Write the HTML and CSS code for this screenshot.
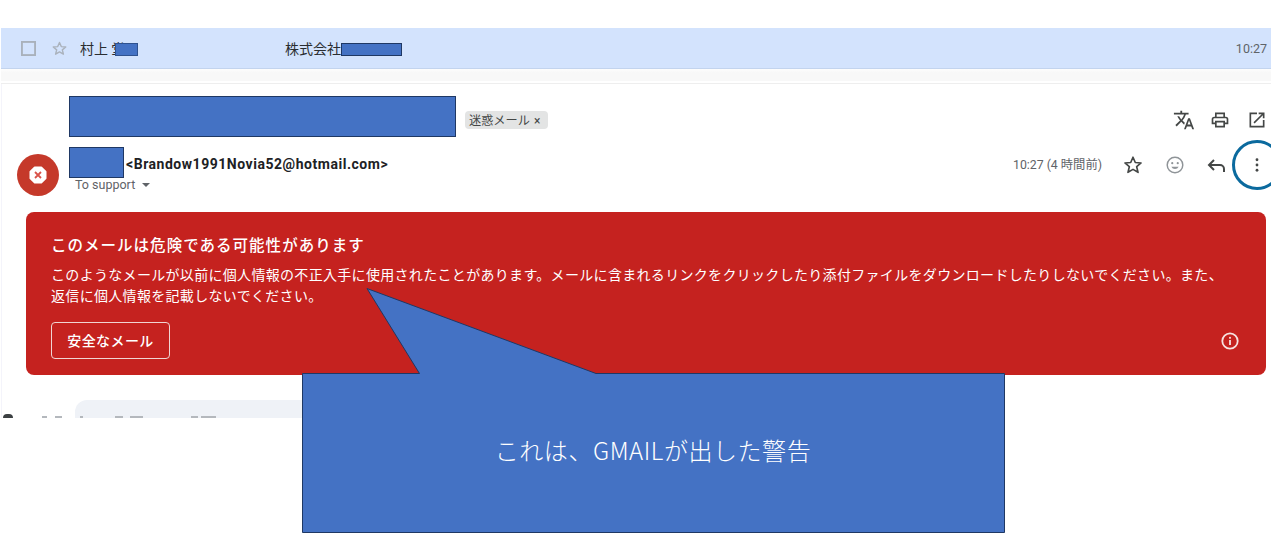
FILE: index.html
```html
<!DOCTYPE html>
<html lang="ja">
<head>
<meta charset="utf-8">
<title>Gmail warning</title>
<link rel="stylesheet" href="styles.css">
</head>
<body>
<div class="page">
  <div class="list-row">
    <svg class="check" viewBox="0 0 16 16" width="15" height="15"><rect x="1" y="1" width="14" height="14" fill="none" stroke="#a9b1bb" stroke-width="2"/></svg>
    <svg class="row-star" viewBox="0 0 24 24" width="17" height="17"><path d="M12 3.5l2.500 5.800 6.300.5-4.800 4.100 1.500 6.100L12 16.800l-5.500 3.200 1.500-6.100-4.800-4.100 6.300-.5z" fill="none" stroke="#aab2bc" stroke-width="2" stroke-linejoin="round"/></svg>
    <div class="sender">村上 堂<span class="redact redact-sender"></span></div>
    <div class="subject">株式会社<span class="redact redact-subject"></span></div>
    <div class="row-time">10:27</div>
  </div>
  <div class="divider"></div>
  <div class="mail">
    <div class="subject-line">
      <span class="redact redact-title"></span>
      <span class="chip">迷惑メール<span class="chip-x">×</span></span>
      <div class="top-icons">
        <svg class="translate" viewBox="0 0 24 24" width="22" height="22"><path d="M12.870 15.070l-2.540-2.510.03-.03A17.500 17.500 0 0 0 14.070 6H17V4h-7V2H8v2H1v2h11.170A15.700 15.700 0 0 1 9 11.350 15.700 15.700 0 0 1 6.690 8h-2a17.500 17.500 0 0 0 2.980 4.560l-5.090 5.020L4 19l5-5 3.110 3.110zM18.500 10h-2L12 22h2l1.120-3h4.750L21 22h2zm-2.620 7l1.620-4.330L19.120 17z" fill="#444746"/></svg>
        <svg viewBox="0 0 24 24" width="20" height="20"><path d="M19 8h-1V3H6v5H5a3 3 0 0 0-3 3v6h4v4h12v-4h4v-6a3 3 0 0 0-3-3zM8 5h8v3H8zm8 14H8v-4h8zm2-4v-2H6v2H4v-4a1 1 0 0 1 1-1h14a1 1 0 0 1 1 1v4z" fill="#444746"/></svg>
        <svg viewBox="0 0 24 24" width="20" height="20"><path d="M19 19H5V5h7V3H3v18h18v-9h-2zM14 3v2h3.590l-9.830 9.830 1.410 1.410L19 6.410V10h2V3z" fill="#444746"/></svg>
      </div>
    </div>
    <div class="header">
      <svg class="avatar" viewBox="0 0 42 42" width="42" height="42"><circle cx="21" cy="21" r="21" fill="#c5392a"/><path d="M17.800 13.500h6.400l4.300 4.300v6.400l-4.300 4.300h-6.400l-4.300-4.300v-6.400z" fill="#fff" stroke="#fff" stroke-linejoin="round" stroke-width="2"/><path d="M18 18l6 6m0-6l-6 6" stroke="#d9534a" stroke-width="1.800"/></svg>
      <div class="who">
        <div class="from"><span class="redact redact-name"></span><b class="addr">&lt;Brandow1991Novia52@hotmail.com&gt;</b></div>
        <div class="to">To support <span class="caret"></span></div>
      </div>
      <div class="meta">
        <span class="mail-time">10:27 (4 時間前)</span>
        <svg class="star" viewBox="0 0 24 24" width="22" height="22"><path d="M12 3.500l2.500 5.800 6.300.5-4.800 4.100 1.500 6.100L12 16.800l-5.500 3.200 1.500-6.100-4.800-4.100 6.300-.5z" fill="none" stroke="#444746" stroke-width="1.800" stroke-linejoin="round"/></svg>
        <svg class="smile" viewBox="0 0 24 24" width="22" height="22"><circle cx="12" cy="12" r="8.500" fill="none" stroke="#8f9498" stroke-width="1.600"/><circle cx="9" cy="10" r="1.200" fill="#8f9498"/><circle cx="15" cy="10" r="1.200" fill="#8f9498"/><path d="M8 14a4.500 4.500 0 0 0 8 0z" fill="#8f9498"/></svg>
        <svg class="reply" viewBox="0 0 24 24" width="24" height="24"><path d="M9 7L4 12l5 5m-5-5h11a4 4 0 0 1 4 4v3" fill="none" stroke="#444746" stroke-width="2"/></svg>
        <svg class="more" viewBox="0 0 4 16" width="4" height="14"><circle cx="2" cy="2" r="1.600" fill="#444746"/><circle cx="2" cy="8" r="1.600" fill="#444746"/><circle cx="2" cy="14" r="1.600" fill="#444746"/></svg>
      </div>
    </div>
    <div class="warning">
      <div class="warn-title">このメールは危険である可能性があります</div>
      <div class="warn-body">このようなメールが以前に個人情報の不正入手に使用されたことがあります。メールに含まれるリンクをクリックしたり添付ファイルをダウンロードしたりしないでください。また、<br>返信に個人情報を記載しないでください。</div>
      <div class="warn-foot">
        <div class="safe-btn">安全なメール</div>
        <svg class="info" viewBox="0 0 20 20" width="20" height="20"><circle cx="10" cy="10" r="7.700" fill="none" stroke="#f7e3e1" stroke-width="1.800"/><rect x="9.100" y="9" width="1.800" height="5" fill="#f7e3e1"/><rect x="9.100" y="5.900" width="1.800" height="1.800" fill="#f7e3e1"/></svg>
      </div>
    </div>
    <div class="below">
      <span class="below-icon"></span>
      <span class="mark m1"></span>
      <span class="mark m2"></span>
      <div class="below-pill">
        <span class="mark m3"></span>
        <span class="mark m4"></span>
        <span class="mark m5"></span>
        <span class="mark m6"></span>
        <span class="mark m7"></span>
      </div>
    </div>
  </div>
  <div class="ring"></div>
  <div class="callout">
    <svg class="callout-shape" viewBox="0 0 704 246" width="704" height="246"><path d="M.5 85.500H117.500L65 .5 294 85.500H702.500V244.500H.5Z" fill="#4472c4" stroke="#1f3864"/></svg>
    <div class="callout-text">これは、GMAILが出した警告</div>
  </div>
</div>
</body>
</html>
```
FILE: styles.css
```css
* { box-sizing: border-box; }
html, body { margin: 0; padding: 0; background: #fff; }
body { font-family: Roboto, "Noto Sans CJK JP", sans-serif; color: #202124; }
.page { position: relative; width: 1271px; height: 540px; overflow: hidden; padding-top: 28px; }

.redact { display: inline-block; background: #4472c4; border: 1px solid #1f3864; vertical-align: top; }

.list-row { height: 41px; margin-left: 1px; background: #d3e3fd; border-bottom: 1px solid #c3d4ee; display: flex; align-items: center; font-size: 14px; color: #2a2d30; }
.check { margin-left: 20px; }
.row-star { margin-left: 15px; }
.sender { margin-left: 12px; width: 205px; font-family: "Noto Sans CJK JP", sans-serif; height: 41px; line-height: 40px; }
.redact-sender { width: 23px; height: 13px; margin-top: 15px; margin-left: -10px; border-color: #2f528f; }
.subject { font-family: "Noto Sans CJK JP", sans-serif; height: 41px; line-height: 40px; flex: 1; }
.redact-subject { width: 61px; height: 13px; margin-top: 15px; }
.row-time { font-size: 12.500px; color: #5f6368; margin-right: 4px; }

.divider { height: 15px; margin-left: 1px; background: #fff; border-bottom: 1px solid #eeeeee; }
.divider::before { content: ""; display: block; height: 12px; background: linear-gradient(#fdfdfd, #f8f8f8 30%, #f8f8f8); }

.mail { margin-left: 1px; border-left: 1px solid #f4f4fb; height: 334px; }
.subject-line { display: flex; align-items: flex-start; height: 53px; padding-top: 12px; padding-left: 67px; }
.redact-title { width: 387px; height: 41px; }
.chip { margin: 15px 0 0 9px; height: 18px; width: 83px; padding-left: 4px; background: #e3e4e4; border-radius: 4px; font: 12.200px/18px "Noto Sans CJK JP", sans-serif; color: #444746; white-space: nowrap; }
.chip-x { margin-left: 4px; font: 12px/18px Roboto, sans-serif; }
.top-icons { margin-left: auto; display: flex; align-items: center; gap: 17px; padding-top: 14px; margin-right: 4px; }
.translate { margin: -1px -1.500px -1px 0; }

.header { display: flex; align-items: flex-start; height: 75px; padding-left: 15px; }
.avatar { margin-top: 17px; }
.who { margin-left: 10px; margin-top: 10px; }
.from { display: flex; height: 31px; }
.redact-name { width: 55px; height: 31px; }
.addr { font: 700 14px/34px Roboto, sans-serif; margin-left: 2px; color: #202124; letter-spacing: .53px; }
.to { font: 12.500px/18px Roboto, sans-serif; color: #5f6368; margin-left: 6px; margin-top: -2px; }
.caret { display: inline-block; width: 0; height: 0; border: 4px solid transparent; border-top: 4px solid #5f6368; border-bottom: 0; margin-left: 4px; vertical-align: 2px; }
.meta { margin-left: auto; display: flex; align-items: center; height: 28px; margin-top: 14px; margin-right: 12px; }
.mail-time { font: 12.300px/20px Roboto, "Noto Sans CJK JP", sans-serif; color: #5f6368; margin-right: 20px; }
.star { margin-right: 20px; }
.smile { margin-right: 19px; }
.reply { margin-right: 26px; }

.warning { margin-left: 24px; width: 1240px; height: 163px; background: #c5221f; border-radius: 8px; color: #fff; padding: 21px 25px 0; font-family: "Noto Sans CJK JP", sans-serif; }
.warn-title { font-size: 15.500px; line-height: 22px; font-weight: 500; letter-spacing: 1.02px; }
.warn-body { margin-top: 9px; font-size: 14px; line-height: 21px; letter-spacing: .315px; white-space: nowrap; }
.warn-foot { display: flex; justify-content: space-between; align-items: center; margin-top: 16px; }
.safe-btn { width: 119px; height: 37px; border: 1px solid #f0d5d3; border-radius: 4px; font-size: 14px; line-height: 35px; font-weight: 500; text-align: center; letter-spacing: .4px; }
.info { margin-right: 1px; margin-top: 1px; }

.below { height: 43px; display: flex; align-items: flex-end; }
.below-icon { width: 10px; height: 4px; margin-left: 1px; background: #3c4043; border-radius: 5px 5px 0 0; }
.below-pill { display: flex; align-items: flex-end; margin-left: 13px; width: 230px; height: 18px; background: #eff2f7; border-radius: 12px 0 0 0; }

.mark { height: 2px; background: #b4b8bd; flex: none; }
.m1 { width: 5px; margin-left: 29px; }
.m2 { width: 7px; margin-left: 8px; }
.m3 { width: 3px; margin-left: 5px; }
.m4 { width: 8px; margin-left: 32px; }
.m5 { width: 13px; margin-left: 7px; }
.m6 { width: 7px; margin-left: 48px; }
.m7 { width: 15px; margin-left: 3px; }

.ring { position: absolute; left: 1232px; top: 140px; width: 50px; height: 50px; border: 3px solid #0b6a9e; border-radius: 50%; }

.callout { position: absolute; left: 302px; top: 288px; width: 704px; height: 246px; }
.callout-shape { position: absolute; left: 0; top: 0; display: block; }
.callout-text { position: absolute; left: 0; right: 2px; top: 86px; height: 158px; padding-bottom: 8px; display: flex; align-items: center; justify-content: center; color: #fff; font: 300 24px "Noto Sans CJK JP", sans-serif; letter-spacing: .55px; }
```
